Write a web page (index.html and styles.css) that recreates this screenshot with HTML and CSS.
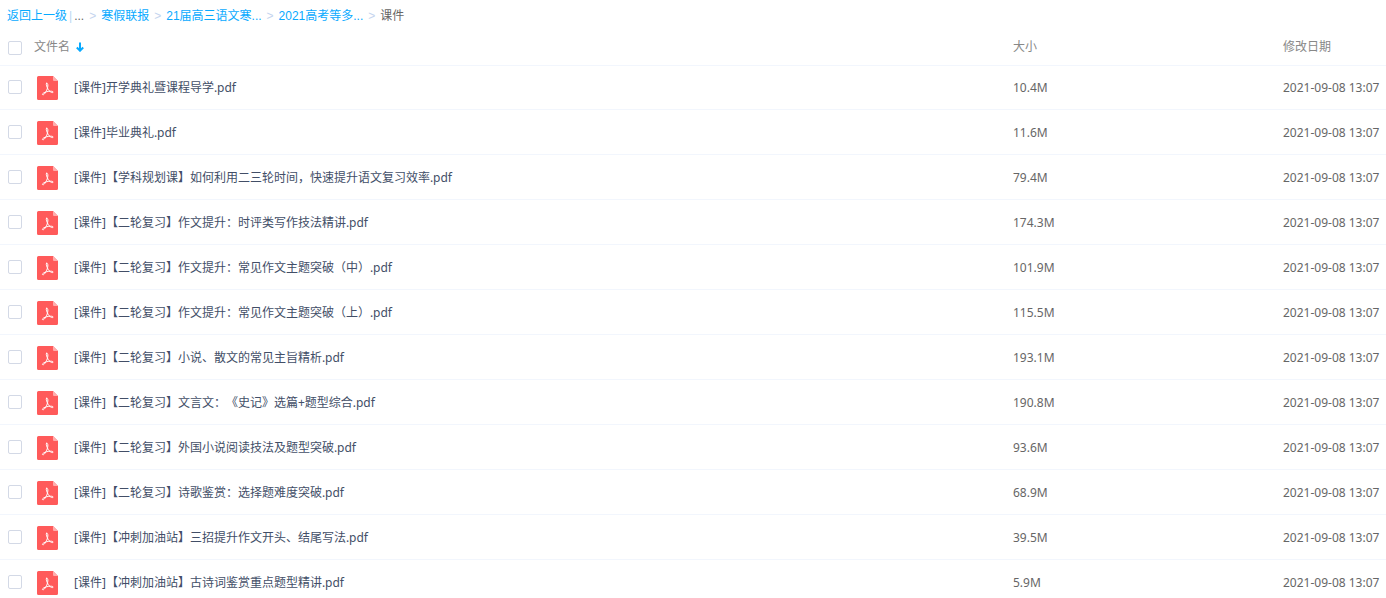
FILE: index.html
```html
<!DOCTYPE html>
<html lang="zh-CN">
<head>
<meta charset="utf-8">
<meta name="viewport" content="width=device-width, initial-scale=1">
<title>课件</title>
<link rel="stylesheet" href="styles.css">
</head>
<body>
<svg class="sprite" aria-hidden="true">
  <symbol id="pdf" viewBox="0 0 21 24">
    <path fill="#ff5a5a" d="M1.500 0H16l5 5v17.500a1.500 1.500 0 0 1-1.500 1.500h-18A1.500 1.500 0 0 1 0 22.500v-21A1.500 1.500 0 0 1 1.500 0z"/>
    <path fill="#ffadad" d="M16 0l5 5h-4a1 1 0 0 1-1-1z"/>
    <path fill="none" stroke="#fff" stroke-width="1" stroke-linecap="round" stroke-linejoin="round" d="M9.700 7.200c1.500-.1 1.400 2.300.8 4.700-.7 2.900-2.900 6.700-4.400 6.900-1 .1-.9-1 .3-1.700 1.800-1.200 4.700-1.800 7.300-1.900 1.900 0 2.700.6 2.400 1.100-.6.800-2.500-.1-4-1.600-1.500-1.600-2.500-4.700-2.800-6.200-.1-.8.100-1.300.4-1.300z"/>
  </symbol>
</svg>

<nav class="breadcrumb" aria-label="路径">
  <a class="crumb" href="#">返回上一级</a>
  <span class="bar">|</span>
  <span class="more">...</span>
  <span class="sep">&gt;</span>
  <a class="crumb" href="#">寒假联报</a>
  <span class="sep">&gt;</span>
  <a class="crumb" href="#">21届高三语文寒...</a>
  <span class="sep">&gt;</span>
  <a class="crumb" href="#">2021高考等多...</a>
  <span class="sep">&gt;</span>
  <span class="current">课件</span>
</nav>

<table class="files">
  <thead>
    <tr>
      <th class="col-check"><input class="check" type="checkbox" aria-label="全选"></th>
      <th class="col-name"><button class="sort" type="button">文件名<svg class="arrow" viewBox="0 0 8 10" aria-hidden="true"><path d="M4 0.500v8M0.800 5.500L4 8.700l3.200-3.200" fill="none" stroke="#09aaff" stroke-width="2"/></svg></button></th>
      <th class="col-size">大小</th>
      <th class="col-date">修改日期</th>
    </tr>
  </thead>
  <tbody>
    <tr><td><input class="check" type="checkbox" id="f1"></td><td><label class="file" for="f1"><svg class="icon"><use href="#pdf"/></svg>[课件]开学典礼暨课程导学.pdf</label></td><td class="meta">10.4M</td><td class="meta">2021-09-08 13:07</td></tr>
    <tr><td><input class="check" type="checkbox" id="f2"></td><td><label class="file" for="f2"><svg class="icon"><use href="#pdf"/></svg>[课件]毕业典礼.pdf</label></td><td class="meta">11.6M</td><td class="meta">2021-09-08 13:07</td></tr>
    <tr><td><input class="check" type="checkbox" id="f3"></td><td><label class="file" for="f3"><svg class="icon"><use href="#pdf"/></svg>[课件]【学科规划课】如何利用二三轮时间，快速提升语文复习效率.pdf</label></td><td class="meta">79.4M</td><td class="meta">2021-09-08 13:07</td></tr>
    <tr><td><input class="check" type="checkbox" id="f4"></td><td><label class="file" for="f4"><svg class="icon"><use href="#pdf"/></svg>[课件]【二轮复习】作文提升：时评类写作技法精讲.pdf</label></td><td class="meta">174.3M</td><td class="meta">2021-09-08 13:07</td></tr>
    <tr><td><input class="check" type="checkbox" id="f5"></td><td><label class="file" for="f5"><svg class="icon"><use href="#pdf"/></svg>[课件]【二轮复习】作文提升：常见作文主题突破（中）.pdf</label></td><td class="meta">101.9M</td><td class="meta">2021-09-08 13:07</td></tr>
    <tr><td><input class="check" type="checkbox" id="f6"></td><td><label class="file" for="f6"><svg class="icon"><use href="#pdf"/></svg>[课件]【二轮复习】作文提升：常见作文主题突破（上）.pdf</label></td><td class="meta">115.5M</td><td class="meta">2021-09-08 13:07</td></tr>
    <tr><td><input class="check" type="checkbox" id="f7"></td><td><label class="file" for="f7"><svg class="icon"><use href="#pdf"/></svg>[课件]【二轮复习】小说、散文的常见主旨精析.pdf</label></td><td class="meta">193.1M</td><td class="meta">2021-09-08 13:07</td></tr>
    <tr><td><input class="check" type="checkbox" id="f8"></td><td><label class="file" for="f8"><svg class="icon"><use href="#pdf"/></svg>[课件]【二轮复习】文言文：《史记》选篇+题型综合.pdf</label></td><td class="meta">190.8M</td><td class="meta">2021-09-08 13:07</td></tr>
    <tr><td><input class="check" type="checkbox" id="f9"></td><td><label class="file" for="f9"><svg class="icon"><use href="#pdf"/></svg>[课件]【二轮复习】外国小说阅读技法及题型突破.pdf</label></td><td class="meta">93.6M</td><td class="meta">2021-09-08 13:07</td></tr>
    <tr><td><input class="check" type="checkbox" id="f10"></td><td><label class="file" for="f10"><svg class="icon"><use href="#pdf"/></svg>[课件]【二轮复习】诗歌鉴赏：选择题难度突破.pdf</label></td><td class="meta">68.9M</td><td class="meta">2021-09-08 13:07</td></tr>
    <tr><td><input class="check" type="checkbox" id="f11"></td><td><label class="file" for="f11"><svg class="icon"><use href="#pdf"/></svg>[课件]【冲刺加油站】三招提升作文开头、结尾写法.pdf</label></td><td class="meta">39.5M</td><td class="meta">2021-09-08 13:07</td></tr>
    <tr><td><input class="check" type="checkbox" id="f12"></td><td><label class="file" for="f12"><svg class="icon"><use href="#pdf"/></svg>[课件]【冲刺加油站】古诗词鉴赏重点题型精讲.pdf</label></td><td class="meta">5.9M</td><td class="meta">2021-09-08 13:07</td></tr>
  </tbody>
</table>
</body>
</html>
```
FILE: styles.css
```css
* {
  box-sizing: border-box;
}

body {
  margin: 0;
  background: #fff;
  color: #424e67;
  font: 12px/24px "Noto Sans", "Noto Sans CJK SC", sans-serif;
  text-spacing-trim: space-all;
}

.sprite {
  display: none;
}

.breadcrumb {
  display: flex;
  padding: 4px 7px 3px;
  font-family: "Liberation Sans", "Noto Sans CJK SC", sans-serif;
  white-space: nowrap;
}

.crumb {
  color: #09aaff;
  text-decoration: none;
}

.bar {
  margin: 0 2px;
  color: #b8d8f4;
}

.more,
.current {
  color: #666;
}

.sep {
  margin: 0 5px;
  color: #c4d4ee;
}

.files {
  width: 100%;
  table-layout: fixed;
  border-collapse: separate;
  border-spacing: 0;
}

th,
td {
  padding: 0;
  text-align: left;
  vertical-align: top;
  white-space: nowrap;
  border-bottom: 1px solid #f2f6fd;
}

th {
  height: 35px;
  padding-top: 4px;
  color: #888;
  font-weight: 400;
}

td {
  height: 45px;
  padding-top: 11px;
}

tbody tr:first-child td {
  height: 44px;
  padding-top: 10px;
}

.col-check {
  width: 34px;
}

.col-size {
  width: 270px;
}

.col-date {
  width: 103px;
}

.check {
  display: block;
  width: 14px;
  height: 14px;
  margin: 4px 0 0 8px;
  appearance: none;
  background: #fff;
  border: 1px solid #d3d9e6;
  border-radius: 2px;
}

thead .check {
  margin-top: 6px;
}

.check:checked {
  background: #09aaff;
  border-color: #09aaff;
}

.sort {
  display: flex;
  align-items: center;
  gap: 6px;
  padding: 0;
  color: inherit;
  font: inherit;
  background: none;
  border: 0;
}

.arrow {
  width: 8px;
  height: 10px;
}

.file {
  display: flex;
  gap: 16px;
  padding-left: 3px;
}

.icon {
  flex: none;
  width: 21px;
  height: 24px;
}

.meta {
  color: #666;
}
```
